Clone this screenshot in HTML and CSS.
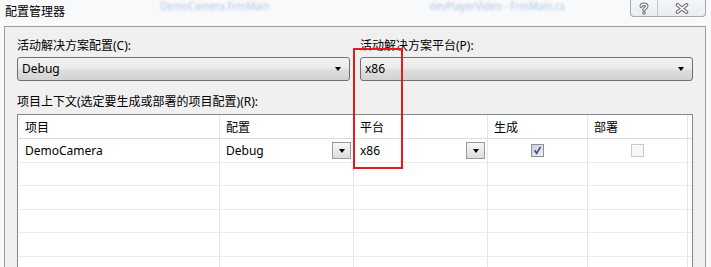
FILE: index.html
```html
<!DOCTYPE html>
<html lang="zh-CN">
<head>
    <meta charset="UTF-8">
    <title>配置管理器</title>
    <link rel="stylesheet" href="styles.css">
</head>
<body>
    <div class="titlebar">
        <span class="title">配置管理器</span>
        <span class="ghost ghost-a">DemoCamera.FrmMain</span>
        <span class="ghost ghost-b">devPlayerVideo - FrmMain.cs</span>
        <div class="caption-buttons">
            <span class="cap help">
                <svg width="12" height="13" viewBox="0 0 12 13">
                    <path d="M3.2 4.2 C3.2 1.6 8.8 1.6 8.8 4.2 C8.8 6 6 6.2 6 8" fill="none" stroke="#6a6a6a" stroke-width="3.4" stroke-linecap="round"/>
                    <circle cx="6" cy="11" r="1.7" fill="#6a6a6a"/>
                    <path d="M3.2 4.2 C3.2 1.6 8.8 1.6 8.8 4.2 C8.8 6 6 6.2 6 8" fill="none" stroke="#fff" stroke-width="1.4" stroke-linecap="round"/>
                    <circle cx="6" cy="11" r="0.7" fill="#fff"/>
                </svg>
            </span>
            <span class="cap close">
                <svg width="14" height="11" viewBox="0 0 14 11">
                    <path d="M2.5 1.8 L11.5 9.2 M11.5 1.8 L2.5 9.2" stroke="#6a6a6a" stroke-width="3.6" stroke-linecap="round"/>
                    <path d="M2.5 1.8 L11.5 9.2 M11.5 1.8 L2.5 9.2" stroke="#fff" stroke-width="1.5" stroke-linecap="round"/>
                </svg>
            </span>
        </div>
    </div>

    <div class="panel">
        <div class="solution-row">
            <div class="field">
                <div class="label">活动解决方案配置(C):</div>
                <div class="combo"><span>Debug</span><i class="arrow"></i></div>
            </div>
            <div class="field">
                <div class="label">活动解决方案平台(P):</div>
                <div class="combo"><span>x86</span><i class="arrow"></i></div>
            </div>
        </div>

        <div class="label context-label">项目上下文(选定要生成或部署的项目配置)(R):</div>

        <div class="grid">
            <div class="row head">
                <div class="cell c-project">项目</div>
                <div class="cell c-config">配置</div>
                <div class="cell c-platform">平台</div>
                <div class="cell c-build">生成</div>
                <div class="cell c-deploy">部署</div>
            </div>
            <div class="row first">
                <div class="cell c-project">DemoCamera</div>
                <div class="cell c-config"><span>Debug</span><span class="drop"><i class="arrow"></i></span></div>
                <div class="cell c-platform"><span>x86</span><span class="drop"><i class="arrow"></i></span></div>
                <div class="cell c-build center">
                    <span class="check">
                        <svg width="11" height="11" viewBox="0 0 11 11">
                            <path d="M2.6 5.2 L4.6 8.2 L8.6 1.8" fill="none" stroke="#3b4f7e" stroke-width="1.6"/>
                        </svg>
                    </span>
                </div>
                <div class="cell c-deploy center"><span class="check off"></span></div>
            </div>
            <div class="row"><div class="cell c-project"></div><div class="cell c-config"></div><div class="cell c-platform"></div><div class="cell c-build"></div><div class="cell c-deploy"></div></div>
            <div class="row"><div class="cell c-project"></div><div class="cell c-config"></div><div class="cell c-platform"></div><div class="cell c-build"></div><div class="cell c-deploy"></div></div>
            <div class="row"><div class="cell c-project"></div><div class="cell c-config"></div><div class="cell c-platform"></div><div class="cell c-build"></div><div class="cell c-deploy"></div></div>
            <div class="row"><div class="cell c-project"></div><div class="cell c-config"></div><div class="cell c-platform"></div><div class="cell c-build"></div><div class="cell c-deploy"></div></div>
            <div class="row"><div class="cell c-project"></div><div class="cell c-config"></div><div class="cell c-platform"></div><div class="cell c-build"></div><div class="cell c-deploy"></div></div>
        </div>
    </div>

    <div class="annotation"></div>
</body>
</html>
```

FILE: styles.css
```css
body {
    margin: 0;
    width: 711px;
    height: 267px;
    overflow: hidden;
    position: relative;
    background-color: #f7f9fb;
    font-family: "Noto Sans", "Noto Sans CJK SC", sans-serif;
    font-size: 12px;
    color: #000;
}
.titlebar {
    display: flex;
    align-items: flex-start;
    height: 26px;
    padding: 0 5px;
}
.title {
    margin-top: 4px;
    line-height: 16px;
}
.ghost {
    margin-top: 1px;
    font-size: 10px;
    line-height: 11px;
    color: #b3cae2;
    filter: blur(1.1px);
    white-space: nowrap;
}
.ghost-a {
    margin-left: 95px;
}
.ghost-b {
    margin-left: 160px;
}
.caption-buttons {
    margin-left: auto;
    display: flex;
    height: 16px;
    border: 1px solid #a3a9b0;
    border-top: none;
    border-radius: 0 0 4px 4px;
    background: linear-gradient(#f4f6f8, #e9edf1);
}
.cap {
    display: flex;
    align-items: center;
    justify-content: center;
}
.help {
    width: 26px;
    border-right: 1px solid #c3c8ce;
}
.close {
    width: 47px;
}
.panel {
    margin-left: 4px;
    width: 702px;
    height: 241px;
    overflow: hidden;
    box-sizing: border-box;
    padding: 11px 12px 0;
    border: 1px solid #9c9c9c;
    border-bottom: none;
    background-color: #f0f0f0;
}
.solution-row {
    display: grid;
    grid-template-columns: 333px 333px;
    column-gap: 10px;
}
.label {
    line-height: 16px;
    margin-bottom: 3px;
    white-space: nowrap;
}
.combo {
    display: flex;
    align-items: center;
    height: 24px;
    box-sizing: border-box;
    padding: 0 8px 0 4px;
    border: 1px solid #707070;
    border-radius: 3px;
    background: linear-gradient(#f3f3f3 0%, #ebebeb 45%, #dedede 55%, #d2d2d2 100%);
}
.combo span {
    flex: 1;
    line-height: 16px;
}
.arrow {
    width: 0;
    height: 0;
    border-left: 3.5px solid transparent;
    border-right: 3.5px solid transparent;
    border-top: 4px solid #000;
}
.context-label {
    margin-top: 13px;
    margin-bottom: 4px;
}
.grid {
    width: 676px;
    height: 170px;
    box-sizing: border-box;
    border: 1px solid #828790;
    background-color: #fff;
}
.row {
    display: flex;
    height: 23.4px;
    box-sizing: border-box;
    border-bottom: 1px solid #ececec;
}
.row.head {
    height: 24px;
    border-bottom-color: #dcdcdc;
}
.row.first {
    height: 24px;
}
.cell {
    display: flex;
    align-items: center;
    box-sizing: border-box;
    padding-left: 6px;
    border-right: 1px solid #e6e6e6;
    white-space: nowrap;
}
.cell.center {
    justify-content: center;
    padding-left: 0;
}
.c-project {
    width: 202px;
    padding-left: 7px;
}
.c-config,
.c-platform {
    width: 134px;
}
.c-build,
.c-deploy {
    width: 100px;
}
.drop {
    margin-left: auto;
    margin-right: 2px;
    width: 19px;
    height: 17px;
    box-sizing: border-box;
    display: flex;
    align-items: center;
    justify-content: center;
    border: 1px solid #9a9a9a;
    background: linear-gradient(#f7f7f7, #dcdcdc);
}
.check {
    width: 13px;
    height: 13px;
    box-sizing: border-box;
    display: flex;
    align-items: center;
    justify-content: center;
    border: 1px solid #8e9097;
    background: linear-gradient(135deg, #c9d0dc, #eef0f5);
}
.check.off {
    border-color: #c9c9c9;
    background: #f7f7f7;
}
.annotation {
    position: absolute;
    left: 353px;
    top: 48px;
    width: 50px;
    height: 121px;
    box-sizing: border-box;
    border: 2px solid #e41b1b;
}
```
